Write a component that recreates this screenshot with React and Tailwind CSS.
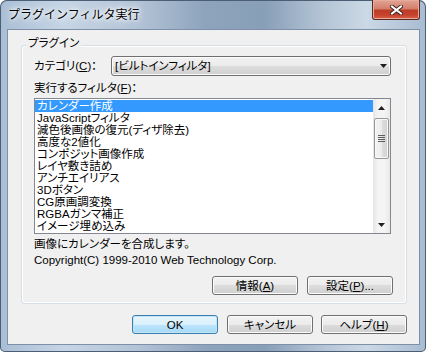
import React from 'react';

const filters = [
  'カレンダー作成',
  'JavaScriptフィルタ',
  '減色後画像の復元(ディザ除去)',
  '高度な2値化',
  'コンポジット画像作成',
  'レイヤ敷き詰め',
  'アンチエイリアス',
  '3Dボタン',
  'CG原画調変換',
  'RGBAガンマ補正',
  'イメージ埋め込み',
];

function Button({ children, primary, className = '' }) {
  const look = primary
    ? 'border-[#3c7fb1] bg-[linear-gradient(#eaf6fd_0%,#d9f0fc_50%,#bee6fd_50%,#a7d9f5_100%)] shadow-[inset_0_0_0_1px_#c4e5f6]'
    : 'border-[#707070] bg-[linear-gradient(#f2f2f2_0%,#ebebeb_50%,#dddddd_50%,#cfcfcf_100%)] shadow-[inset_0_0_0_1px_#fcfcfc]';
  return (
    <div className={`flex h-[19px] w-[86px] items-center justify-center rounded-[3px] border text-[11.5px] leading-[12px] ${look} ${className}`}>
      {children}
    </div>
  );
}

function Arrow({ up }) {
  return (
    <svg width="7" height="4" viewBox="0 0 7 4">
      <path d={up ? 'M3.5 0 L7 4 L0 4 Z' : 'M0 0 L7 0 L3.5 4 Z'} fill="#1f1f1f" />
    </svg>
  );
}

function Scrollbar() {
  return (
    <div className="flex w-[17px] flex-col bg-[linear-gradient(90deg,#e6e6e6,#f4f4f4_30%,#f4f4f4_70%,#e8e8e8)]">
      <div className="flex h-[17px] items-center justify-center">
        <Arrow up />
      </div>
      <div className="mx-[1px] mt-[2px] flex h-[41px] w-[15px] flex-col items-center justify-center gap-[1px] rounded-[2px] border border-[#979797] bg-[linear-gradient(90deg,#f4f4f4_0%,#ececec_50%,#dedede_50%,#d2d2d2_100%)] shadow-[inset_0_0_0_1px_#f8f8f8]">
        {[0, 1, 2, 3].map((i) => (
          <div key={i} className="h-[1px] w-[7px] bg-[#5e5e5e]" />
        ))}
      </div>
      <div className="flex-1" />
      <div className="flex h-[17px] items-center justify-center">
        <Arrow />
      </div>
    </div>
  );
}

export default function App() {
  return (
    <div className="flex h-[352px] w-[426px] flex-col overflow-hidden rounded-t-[7px] rounded-b-[5px] bg-[linear-gradient(90deg,#a9bed5_0%,#c6d5e5_15%,#b3c4d7_32%,#8ea4bd_48%,#889fb8_62%,#b5c5d6_76%,#cbd8e5_86%,#a8bcd2_100%)] font-['Liberation_Sans','Noto_Sans_CJK_JP',sans-serif] text-black shadow-[inset_0_0_0_1px_#4c5e74] [font-feature-settings:'palt']">
      {/* title bar */}
      <div className="flex h-[29px] shrink-0">
        <div className="flex items-center pl-[8px] text-[12px] leading-[12px] [font-feature-settings:normal] [text-shadow:0_0_6px_#ffffff,0_0_3px_#ffffff,0_0_10px_#ffffff]">
          プラグインフィルタ実行
        </div>
        <div className="mr-[6px] ml-auto flex h-[20px] w-[48px] items-center justify-center rounded-b-[3px] border border-t-0 border-[#5e2720] bg-[linear-gradient(#e2a493_0%,#d47f6c_45%,#bd3d29_55%,#c7432d_80%,#d8644a_100%)] shadow-[inset_0_0_0_1px_#e6ab9d]">
          <svg width="13" height="10" viewBox="0 0 13 10">
            <path d="M2 1.5 L11 8.5 M11 1.5 L2 8.5" stroke="#3d2320" strokeWidth="4" strokeLinecap="square" />
            <path d="M2 1.5 L11 8.5 M11 1.5 L2 8.5" stroke="#ffffff" strokeWidth="2" strokeLinecap="square" />
          </svg>
        </div>
      </div>

      {/* client area */}
      <div className="ml-[7px] h-[316px] w-[413px] shrink-0 border border-[#7d90a7] bg-[#f0f0f0] text-[11.5px]">
        <div className="relative mt-[15px] ml-[13px] h-[259px] w-[386px] rounded-[3px] border border-[#d5dfe5] shadow-[inset_0_0_0_1px_#ffffff]">
          <span className="absolute top-[-9px] left-[4px] bg-[#f0f0f0] px-[2px] leading-[12px]">プラグイン</span>

          <div className="pt-[10px] pl-[12px]">
            <div className="flex h-[20px] items-center">
              <div className="w-[77px] leading-[12px]">
                カテゴリ(<u>C</u>)：
              </div>
              <div className="flex h-[20px] w-[280px] items-center rounded-[3px] border border-[#707070] bg-[linear-gradient(#f2f2f2_0%,#ebebeb_50%,#dddddd_50%,#cfcfcf_100%)] pl-[3px] leading-[12px] shadow-[inset_0_0_0_1px_#fcfcfc]">
                <span>[ビルトインフィルタ]</span>
                <span className="mr-[3px] ml-auto flex">
                  <Arrow />
                </span>
              </div>
            </div>

            <div className="mt-[6px] h-[12px] leading-[12px]">
              実行するフィルタ(<u>F</u>)：
            </div>

            <div className="mt-[4px] flex h-[136px] w-[357px] border border-[#828790] bg-white">
              <div className="flex-1 pt-[1px]">
                {filters.map((f, i) => (
                  <div
                    key={f}
                    className={`h-[12px] pl-[2px] leading-[12px] whitespace-nowrap ${i === 0 ? 'bg-[#3399ff] text-white' : ''}`}
                  >
                    {f}
                  </div>
                ))}
              </div>
              <Scrollbar />
            </div>

            <div className="mt-[2px] h-[16px] leading-[16px]">画像にカレンダーを合成します。</div>
            <div className="h-[16px] leading-[16px] whitespace-nowrap">Copyright(C) 1999-2010 Web Technology Corp.</div>

            <div className="mt-[8px] ml-[178px] flex gap-[9px]">
              <Button>
                情報(<u>A</u>)
              </Button>
              <Button>
                設定(<u>P</u>)...
              </Button>
            </div>
          </div>
        </div>

        <div className="mt-[11px] ml-[124px] flex">
          <Button primary>OK</Button>
          <Button className="ml-[9px]">キャンセル</Button>
          <Button className="ml-[8px]">
            ヘルプ(<u>H</u>)
          </Button>
        </div>
      </div>
    </div>
  );
}
